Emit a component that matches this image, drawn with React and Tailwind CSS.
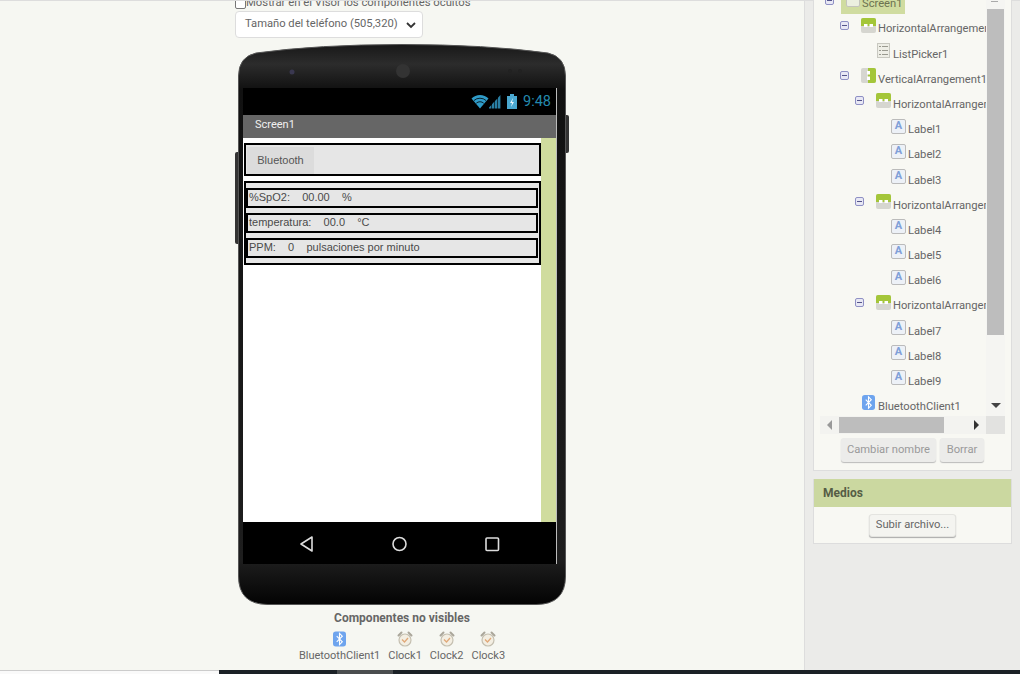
const tree = [
  { name: 'Screen1', type: 'screen', depth: 0, toggle: true, selected: true },
  { name: 'HorizontalArrangement1', type: 'h', depth: 1, toggle: true },
  { name: 'ListPicker1', type: 'list', depth: 2 },
  { name: 'VerticalArrangement1', type: 'v', depth: 1, toggle: true },
  { name: 'HorizontalArrangement2', type: 'h', depth: 2, toggle: true },
  { name: 'Label1', type: 'label', depth: 3 },
  { name: 'Label2', type: 'label', depth: 3 },
  { name: 'Label3', type: 'label', depth: 3 },
  { name: 'HorizontalArrangement3', type: 'h', depth: 2, toggle: true },
  { name: 'Label4', type: 'label', depth: 3 },
  { name: 'Label5', type: 'label', depth: 3 },
  { name: 'Label6', type: 'label', depth: 3 },
  { name: 'HorizontalArrangement4', type: 'h', depth: 2, toggle: true },
  { name: 'Label7', type: 'label', depth: 3 },
  { name: 'Label8', type: 'label', depth: 3 },
  { name: 'Label9', type: 'label', depth: 3 },
  { name: 'BluetoothClient1', type: 'bt', depth: 1 },
];

const depthClass = ['pl-[5px]', 'pl-[20px]', 'pl-[35px]', 'pl-[50px]'];

const BluetoothIcon = ({ className }) => (
  <svg viewBox="0 0 14 16" className={className}>
    <rect width="14" height="16" rx="3" fill="#6ea4ee" />
    <path d="M4 5l6 6-3 3V2l3 3-6 6" fill="none" stroke="#fff" strokeWidth="1.2" />
  </svg>
);

const ClockIcon = () => (
  <svg viewBox="0 0 16 16" className="w-4 h-4">
    <path d="M1.5 4.5L4.5 1.5M14.5 4.5L11.5 1.5" stroke="#aaa69a" strokeWidth="2" strokeLinecap="round" />
    <circle cx="8" cy="9" r="6" fill="#f3eee2" stroke="#c4bfb0" strokeWidth="1.2" />
    <path d="M5 8.5L7.5 11 11 7" fill="none" stroke="#e0a878" strokeWidth="1.3" />
  </svg>
);

const TreeIcon = ({ type }) => {
  if (type === 'label') {
    return (
      <div className="w-[15px] h-[15px] rounded-[2px] border border-[#bbb] bg-[#edf1f7] flex items-center justify-center text-[11px] leading-none font-bold text-[#7f9fd8] pb-[2px]">
        A
      </div>
    );
  }
  if (type === 'h') {
    return (
      <svg viewBox="0 0 15 15" className="w-[15px] h-[15px]">
        <rect width="15" height="15" rx="2" fill="#d6d6d0" />
        <path d="M0 8V2a2 2 0 012-2h11a2 2 0 012 2v6z" fill="#a4c639" />
        <rect x="3" y="6" width="3.5" height="3" fill="#fff" />
        <rect x="8.5" y="6" width="3.5" height="3" fill="#fff" />
      </svg>
    );
  }
  if (type === 'v') {
    return (
      <svg viewBox="0 0 15 15" className="w-[15px] h-[15px]">
        <rect width="15" height="15" rx="2" fill="#d6d6d0" />
        <path d="M7 0h6a2 2 0 012 2v11a2 2 0 01-2 2H7z" fill="#a4c639" />
        <rect x="6" y="3" width="3" height="3.5" fill="#fff" />
        <rect x="6" y="8.5" width="3" height="3.5" fill="#fff" />
      </svg>
    );
  }
  if (type === 'list') {
    return (
      <svg viewBox="0 0 13 15" className="w-[13px] h-[15px] ml-px mr-[1px]">
        <rect x="0.5" y="0.5" width="12" height="14" fill="#eeeee6" stroke="#c8c8c0" />
        <path d="M2 3.5h2M5 3.5h6M2 7.5h2M5 7.5h6M2 11.5h2M5 11.5h6" stroke="#9a9a90" />
      </svg>
    );
  }
  if (type === 'bt') {
    return <BluetoothIcon className="w-[13px] h-[15px] mb-[2px] ml-[1px] mr-[1px]" />;
  }
  return <div className="w-[14px] h-[14px] bg-[#ecefe0] border border-[#c4c4bc] rounded-[2px] mb-[6px]" />;
};

const TreeRow = ({ item }) => (
  <div className={`h-[25.2px] flex items-center whitespace-nowrap ${depthClass[item.depth]}`}>
    <div className="w-[21px] shrink-0 pb-[6px]">
      {item.toggle && (
        <div className="w-[9px] h-[9px] rounded-[2px] border border-[#8f90c4] bg-[#e8e8f4] flex items-center justify-center">
          <div className="w-[5px] h-px bg-[#55558a]" />
        </div>
      )}
    </div>
    {item.selected ? (
      <div className="flex items-center gap-[2px] bg-[#d0dca0] pr-[2px] pl-[5px] -ml-[5px] h-[22px]">
        <TreeIcon type={item.type} />
        <span className="text-[11.2px] text-[#6c7250] mt-[2px]">{item.name}</span>
      </div>
    ) : (
      <div className="flex items-center gap-[2px]">
        <div className="pb-[6px]">
          <TreeIcon type={item.type} />
        </div>
        <span className="text-[11.2px] text-[#666] mt-[3px]">{item.name}</span>
      </div>
    )}
  </div>
);

const Phone = () => (
  <div className="relative w-[328px] h-[561px] mt-[6px] ml-[3px]">
    <div className="absolute left-[-3px] top-[108px] w-[3px] h-[92px] bg-[#333] rounded-l-[2px]" />
    <div className="absolute right-[-3px] top-[71px] w-[3px] h-[38px] bg-[#333] rounded-r-[2px]" />
    <svg viewBox="0 0 328 561" className="absolute inset-0 w-full h-full">
      <defs>
        <linearGradient id="body" x1="0" y1="0" x2="0" y2="1">
          <stop offset="0" stopColor="#181818" />
          <stop offset="0.035" stopColor="#2c2c2c" />
          <stop offset="0.08" stopColor="#111" />
          <stop offset="0.92" stopColor="#1e1e1e" />
          <stop offset="1" stopColor="#030303" />
        </linearGradient>
      </defs>
      <path
        d="M0.5 32Q0.5 13 18 9Q80 0.5 164 0.5Q248 0.5 310 9Q327.5 13 327.5 32V532Q327.5 560.5 298 560.5H30Q0.5 560.5 0.5 532Z"
        fill="url(#body)"
        stroke="#555"
        strokeWidth="1"
      />
      <circle cx="54" cy="28" r="2.5" fill="#3a3850" />
      <circle cx="165" cy="27" r="7" fill="#333" />
      <circle cx="272" cy="27" r="2" fill="#222" />
      <circle cx="282" cy="27" r="2" fill="#222" />
    </svg>
    <div className="relative pt-[44px] pl-[5px] w-[319px]">
      <div className="border-r border-[#bbb]">
        <div className="h-[27px] bg-black flex items-center justify-end gap-[6px] pr-[5px]">
          <svg viewBox="0 0 30 15" className="w-[30px] h-[15px]">
            <path d="M0.5 4.5a12 12 0 0117 0L9 14.5z" fill="#2f9bc8" />
            <path d="M3 6.5a9 9 0 0112 0" fill="none" stroke="#000" strokeWidth="0.8" />
            <path d="M5.3 9.2a5.4 5.4 0 017.4 0" fill="none" stroke="#000" strokeWidth="0.8" />
            <path d="M18 14.5h2.4v-3.5l-2.4 2.4zM21 14.5h2.4V7.6l-2.4 2.6zM24 14.5h2.4V4.4l-2.4 2.6zM27 14.5h2.4V1l-2.4 2.8z" fill="#2a7fa4" />
          </svg>
          <svg viewBox="0 0 10 15" className="w-[10px] h-[15px]">
            <path d="M3 0h4v2h3v13H0V2h3z" fill="#4aa8d0" />
            <path d="M6 4L3 9h2l-1 4 3-5H5z" fill="#e6f4fa" />
          </svg>
          <span className="text-[14.5px] text-[#2489ad] font-['Roboto',sans-serif]">9:48</span>
        </div>
        <div className="h-[23px] bg-[#666] flex items-center pl-[12px] pb-[2px] text-[11px] text-[#f0f0f0] font-['Roboto',sans-serif]">
          Screen1
        </div>
        <div className="h-[384px] bg-white flex font-['Liberation_Sans',Arial,sans-serif] text-[11px] text-[#4a4a4a]">
          <div className="w-[298px] pt-[5px] pl-px">
            <div className="h-[33px] border-2 border-black bg-[#e6e6e6] flex items-center pl-px">
              <div className="w-[67px] h-[27px] bg-[#dcdcdc] flex items-center justify-center text-[#555] mt-px">Bluetooth</div>
            </div>
            <div className="h-[84px] mt-[5px] border-2 border-black bg-[#e6e6e6] pt-[5px] pr-px flex flex-col gap-[5px]">
              {[
                '%SpO2:    00.00    %',
                'temperatura:    00.0    °C',
                'PPM:    0    pulsaciones por minuto',
              ].map((line) => (
                <div key={line} className="h-[20px] border-2 border-black flex items-center pl-px pb-px whitespace-pre">
                  {line}
                </div>
              ))}
            </div>
          </div>
          <div className="flex-1 bg-[#d0dc9e]" />
        </div>
        <div className="h-[42px] bg-black flex items-center">
          <svg viewBox="0 0 313 42" className="w-[313px] h-[42px]">
            <path d="M69 15L58 22l11 7z" fill="none" stroke="#ddd" strokeWidth="1.6" strokeLinejoin="round" />
            <circle cx="156.5" cy="22" r="6.5" fill="none" stroke="#ddd" strokeWidth="1.6" />
            <rect x="243" y="16" width="12.5" height="12.5" rx="1" fill="none" stroke="#ddd" strokeWidth="1.6" />
          </svg>
        </div>
      </div>
    </div>
  </div>
);

const App = () => {
  return (
    <div className="w-[1020px] h-[674px] overflow-hidden bg-[#f6f7f2] font-['Roboto',sans-serif]">
      <div className="h-[670px] flex border-t border-[#ddd]">
        <div className="w-[805px] shrink-0 pl-[235px] border-r border-[#ddd] overflow-hidden">
          <div className="-mt-[6px] h-[16px] flex items-center gap-0 text-[11.3px] text-[#666] whitespace-nowrap">
            <div className="w-[11px] h-[11px] border border-[#777] rounded-[2px] bg-white" />
            <span>Mostrar en el Visor los componentes ocultos</span>
          </div>
          <div className="w-[188px] h-[27px] bg-white border border-[#ddd] rounded-[4px] flex items-center justify-between pl-[9px] pr-[5px] text-[11.2px] text-[#666] whitespace-nowrap">
            <span>Tamaño del teléfono (505,320)</span>
            <svg viewBox="0 0 12 12" className="w-3 h-3">
              <path d="M2 4l4 4 4-4" fill="none" stroke="#333" strokeWidth="1.8" />
            </svg>
          </div>
          <Phone />
          <div className="w-[334px] mt-[6px] flex flex-col items-center text-[#666]">
            <div className="text-[12px] font-bold leading-[14px]">Componentes no visibles</div>
            <div className="flex gap-[8px] mt-[6px] text-[11px] whitespace-nowrap">
              <div className="flex flex-col items-center">
                <BluetoothIcon className="w-[13px] h-[16px]" />
                <span className="mt-px">BluetoothClient1</span>
              </div>
              {['Clock1', 'Clock2', 'Clock3'].map((c) => (
                <div key={c} className="flex flex-col items-center">
                  <ClockIcon />
                  <span className="mt-px">{c}</span>
                </div>
              ))}
            </div>
          </div>
        </div>

        <div className="flex-1 bg-[#ebebe9] pl-[8px]">
          <div className="w-[199px] h-[471px] bg-[#f8f8f3] border-x border-b border-[#ddd] -mt-px pl-[6px]">
            <div className="flex h-[416px]">
              <div className="w-[166px] overflow-hidden">
                <div className="-mt-[9.5px]">
                  {tree.map((item) => (
                    <TreeRow key={item.name} item={item} />
                  ))}
                </div>
              </div>
              <div className="relative w-[19px] bg-[#f5f5f2]">
                <div className="absolute left-[5px] top-[1px] w-[7px] h-px bg-[#aaa]" />
                <div className="ml-px w-[17px] h-[326px] mt-[9px] bg-[#bdbdbd]" />
                <div className="absolute left-[5px] top-[403px] w-0 h-0 border-x-[5px] border-x-transparent border-t-[5px] border-t-[#444]" />
              </div>
            </div>
            <div className="flex h-[18px]">
              <div className="w-[166px] bg-[#f3f3f0] flex items-center">
                <div className="w-[19px] flex justify-center">
                  <div className="w-0 h-0 border-y-[5px] border-y-transparent border-r-[5px] border-r-[#999]" />
                </div>
                <div className="w-[105px] h-[16px] bg-[#bdbdbd]" />
                <div className="ml-[30px] w-0 h-0 border-y-[5px] border-y-transparent border-l-[5px] border-l-[#333]" />
              </div>
              <div className="w-[19px] bg-[#e2e2e0]" />
            </div>
            <div className="flex gap-[4px] pl-[21px] mt-[4px]">
              <div className="w-[95px] h-[24px] bg-[#ececea] rounded-[3px] shadow-[0_1px_1px_#bbb] flex items-center justify-center text-[11.2px] text-[#9a9a9a]">
                Cambiar nombre
              </div>
              <div className="w-[44px] h-[24px] bg-[#ececea] rounded-[3px] shadow-[0_1px_1px_#bbb] flex items-center justify-center text-[11.2px] text-[#9a9a9a]">
                Borrar
              </div>
            </div>
          </div>
          <div className="w-[199px] h-[65px] mt-[8px] bg-[#f8f8f3] border-x border-b border-[#ddd]">
            <div className="h-[28px] bg-[#cbd8a0] flex items-center pl-[9px] text-[12px] font-bold text-[#555d45]">
              Medios
            </div>
            <div className="flex justify-center pt-[7px]">
              <div className="w-[87px] h-[23px] bg-[#f4f4f0] rounded-[3px] border border-[#e4e4e0] shadow-[0_1px_1px_#aaa] flex items-center justify-center text-[11.2px] text-[#666]">
                Subir archivo...
              </div>
            </div>
          </div>
        </div>
      </div>
      <div className="h-[4px] flex">
        <div className="w-[219px] bg-[#fafafa] border-t border-[#ccc]" />
        <div className="w-[118px] bg-[#1b2126]" />
        <div className="w-[56px] bg-[#4a4d4f]" />
        <div className="flex-1 bg-[#1b2126]" />
      </div>
    </div>
  );
};

export default App;
